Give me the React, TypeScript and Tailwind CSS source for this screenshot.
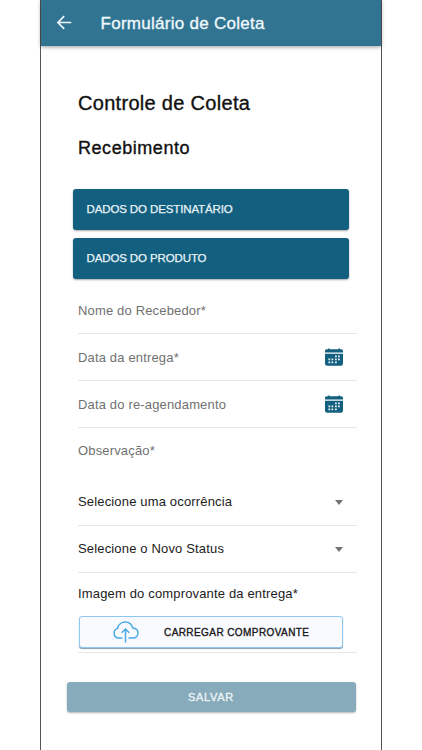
import React from 'react';

interface FieldRowProps {
  label: string;
  children?: React.ReactNode;
}

const BackIcon: React.FC = () => (
  <svg className="w-4 h-4 shrink-0" viewBox="0 0 16 16" fill="none" stroke="#eef7fb" strokeWidth="1.7">
    <path d="M15.300 7.500H2M8.200 1.200L1.900 7.500l6.300 6.300" />
  </svg>
);

const CalendarIcon: React.FC = () => (
  <svg className="w-[18px] h-[18px] mr-[14px] shrink-0" viewBox="0 0 18 18">
    <path
      fill="#135f7f"
      d="M0 4.400V3a1.800 1.800 0 0 1 1.800-1.800H3V.4h1.600v.8h8.800V.4H15v.8h1.200A1.800 1.800 0 0 1 18 3v1.400zM0 5.800h18v9.700a2.200 2.200 0 0 1-2.200 2.200H2.200A2.200 2.200 0 0 1 0 15.500z"
    />
    <path
      fill="#e4f0f5"
      d="M10 7.500h1.800v1.800H10zM13 7.500h1.800v1.800H13zM3.400 10.400h1.800v1.800H3.400zM6.500 10.400h1.800v1.800H6.500zM10 10.400h1.800v1.800H10zM13 10.400h1.800v1.800H13zM3.400 13.400h1.800v1.800H3.400zM6.500 13.400h1.800v1.800H6.500zM10 13.400h1.800v1.800H10z"
    />
  </svg>
);

const CloudUploadIcon: React.FC = () => (
  <svg className="w-[27px] h-[22px] shrink-0" viewBox="0 0 27 22" fill="none" stroke="#4aabe4" strokeWidth="1.5">
    <path d="M10.500 17H5.800A5 5 0 0 1 5.600 7.400C6.300 3.600 9.500 1 13.200 1c3.700 0 6.600 2.400 7.500 6.100 3.100.3 5.300 2.300 5.300 5 0 2.900-2.200 4.900-5 4.900h-4.500" />
    <path d="M13.500 21.500V8.300M9.700 11.800l3.800-3.800 3.800 3.800" />
  </svg>
);

const CaretIcon: React.FC = () => (
  <svg className="w-2 h-[5px] mr-[14px] shrink-0" viewBox="0 0 8 5">
    <path fill="#737373" d="M0 0h8L4 5z" />
  </svg>
);

const InputRow: React.FC<FieldRowProps> = ({ label, children }) => (
  <div className="h-[47px] border-b border-[#e6e6e6] flex items-center justify-between">
    <span className="pt-0.5 text-[#717171]">{label}</span>
    {children}
  </div>
);

const SelectRow: React.FC<FieldRowProps> = ({ label }) => (
  <div className="h-[47px] border-b border-[#e6e6e6] flex items-center justify-between">
    <span className="text-[#1c1c1c]">{label}</span>
    <CaretIcon />
  </div>
);

const SectionButton: React.FC<{ label: string }> = ({ label }) => (
  <button className="h-[41px] w-[276px] rounded-[3px] bg-[#135f7f] pl-[13.5px] text-left text-[11.5px] tracking-[-0.12px] text-[#e8f3f8] shadow-[0_1px_2px_rgba(0,0,0,0.35)] [-webkit-text-stroke:0.25px]">
    {label}
  </button>
);

export default function App() {
  return (
    <div className="h-[750px] w-[422px] overflow-hidden bg-white font-['Liberation_Sans',Arial,sans-serif]">
      <div className="mx-auto flex h-full w-[342px] flex-col border-x border-[#555] whitespace-nowrap">
        <header className="flex h-[46px] shrink-0 items-center bg-[#307491] pl-[15px] shadow-[0_1px_4px_rgba(0,0,0,0.4)]">
          <BackIcon />
          <h1 className="ml-[28.5px] pt-px text-[17px] tracking-[0.28px] text-[#eef7fb] [-webkit-text-stroke:0.35px]">
            Formulário de Coleta
          </h1>
        </header>

        <main className="flex flex-col pt-[45px] text-[13px] tracking-[0.16px]">
          <h2 className="pl-[37px] text-[20px] leading-6 tracking-[0.3px] text-[#111] [-webkit-text-stroke:0.35px]">
            Controle de Coleta
          </h2>
          <h3 className="mt-[21px] pl-[37px] text-[18px] leading-6 tracking-[0.55px] text-[#111] [-webkit-text-stroke:0.35px]">
            Recebimento
          </h3>

          <div className="mt-[29px] flex flex-col gap-2 pl-8">
            <SectionButton label="DADOS DO DESTINATÁRIO" />
            <SectionButton label="DADOS DO PRODUTO" />
          </div>

          <form className="mt-2 ml-[37px] w-[279px]">
            <InputRow label="Nome do Recebedor*" />
            <InputRow label="Data da entrega*">
              <CalendarIcon />
            </InputRow>
            <InputRow label="Data do re-agendamento">
              <CalendarIcon />
            </InputRow>
            <div className="flex h-[51px] items-start pt-[13px] text-[#717171]">Observação*</div>
            <SelectRow label="Selecione uma ocorrência" />
            <SelectRow label="Selecione o Novo Status" />
            <div className="h-20 border-b border-[#e6e6e6] pt-[11px] text-[#1c1c1c]">
              <div className="h-[17px] overflow-hidden leading-5">Imagem do comprovante da entrega*</div>
              <button
                type="button"
                className="mt-[15px] ml-px flex h-8 w-[264px] items-center rounded-[3px] border border-[#8cc8ef] bg-[#f8faff] pl-[32px] text-[10px] tracking-[0.42px] text-[#181818] shadow-[0_1px_1px_rgba(60,90,120,0.6)] [-webkit-text-stroke:0.35px]"
              >
                <CloudUploadIcon />
                <span className="ml-[25px]">CARREGAR COMPROVANTE</span>
              </button>
            </div>
          </form>

          <button className="mt-[29px] ml-[26px] h-[30px] w-[289px] rounded-[3px] bg-[#88abbb] pr-px text-[11px] tracking-[0.7px] text-[#eef5f8] shadow-[0_1px_2px_rgba(0,0,0,0.3)] [-webkit-text-stroke:0.3px]">
            SALVAR
          </button>
        </main>
      </div>
    </div>
  );
}
